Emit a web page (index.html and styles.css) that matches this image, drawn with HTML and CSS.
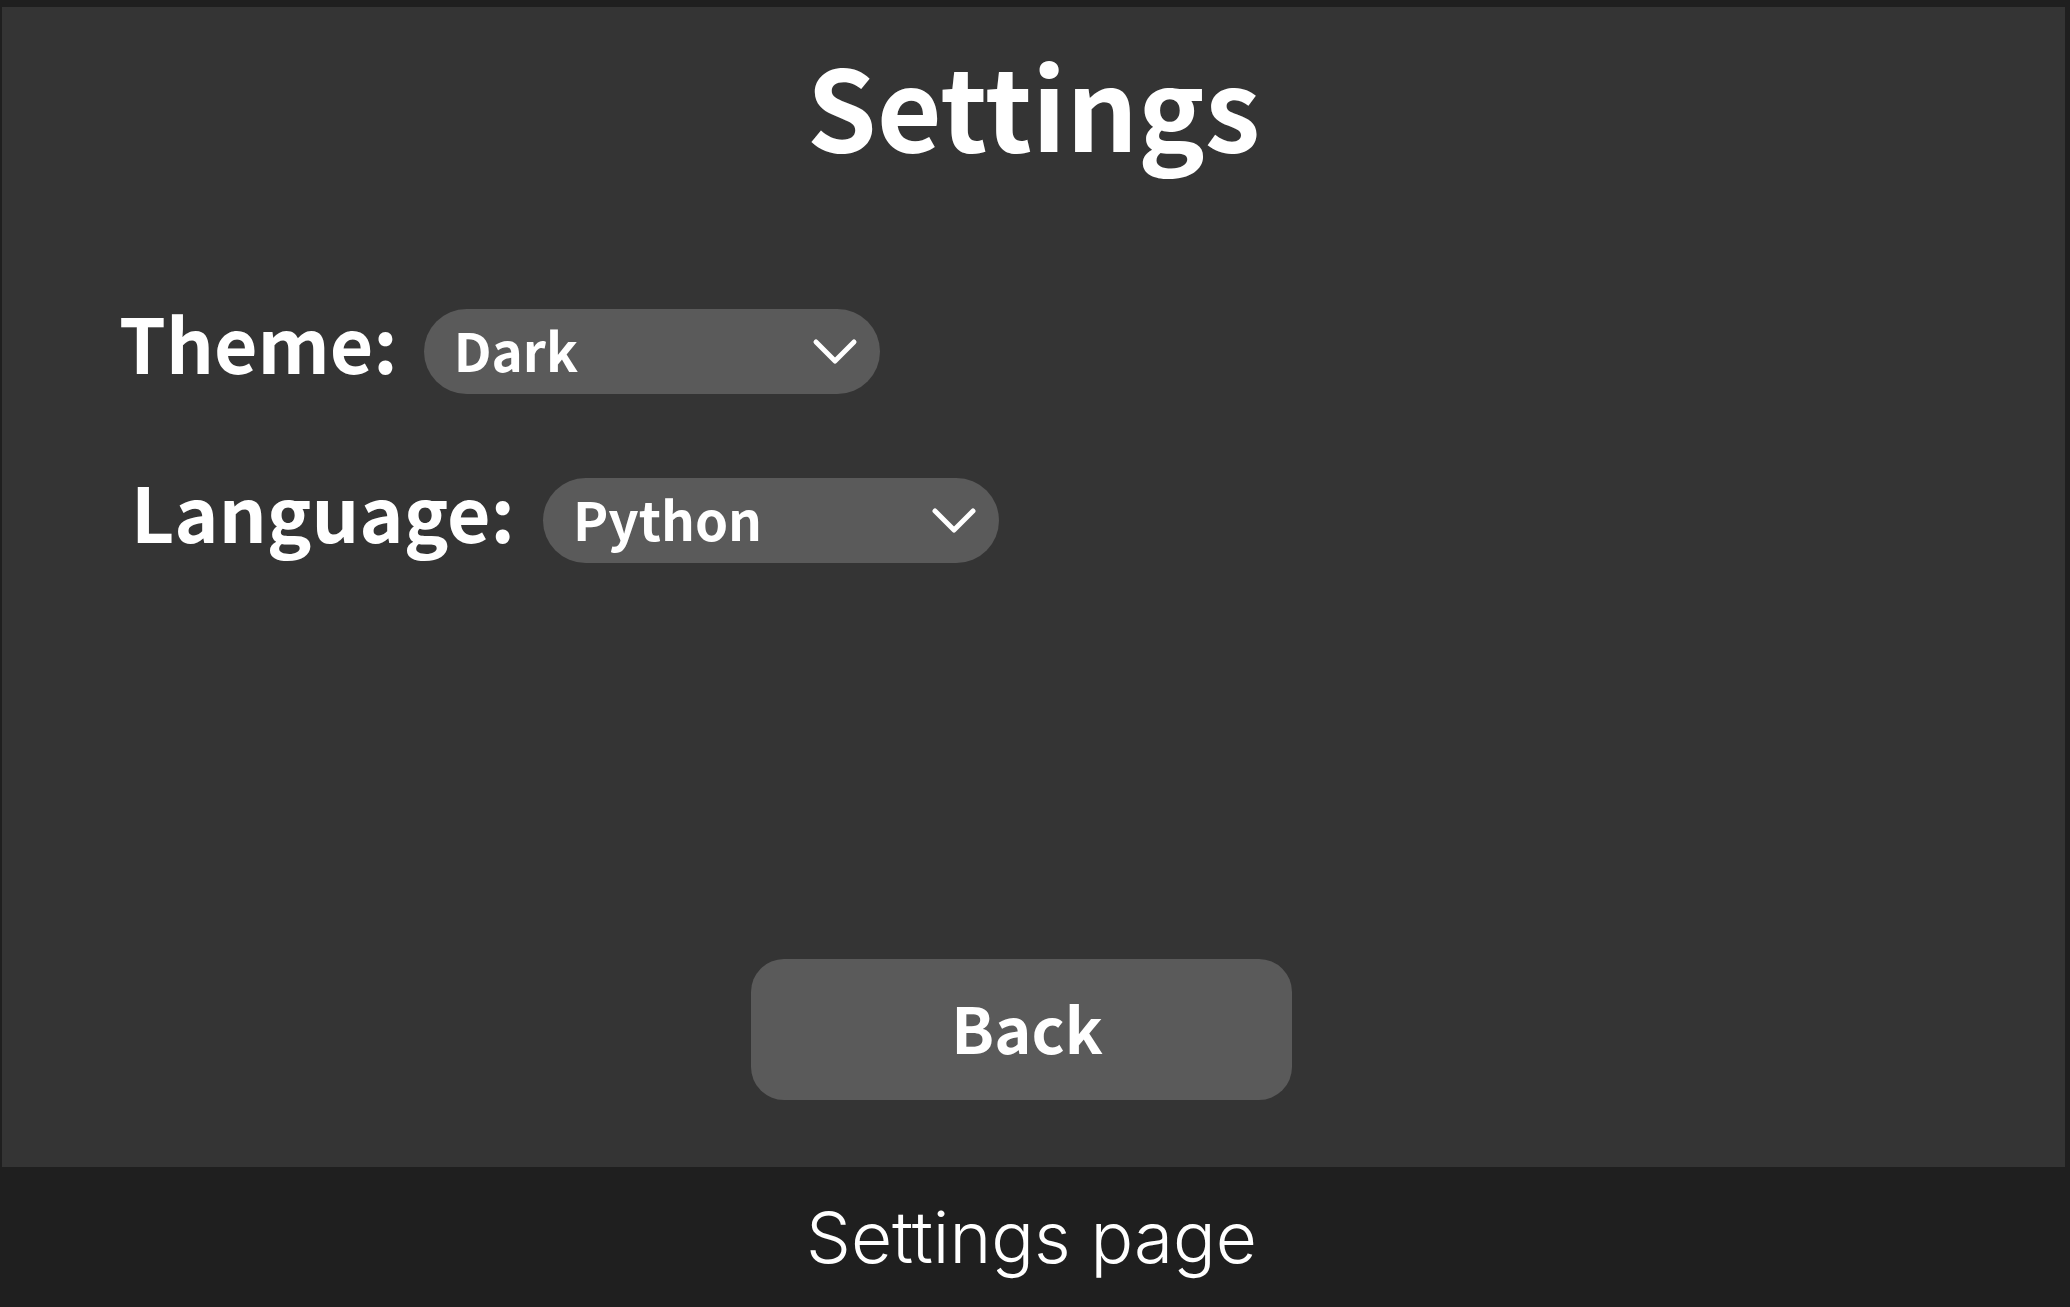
FILE: index.html
```html
<!DOCTYPE html>
<html lang="en">
<head>
<meta charset="utf-8">
<title>Settings</title>
<link rel="stylesheet" href="styles.css">
</head>
<body>
<div class="app">
  <main class="panel">
    <h1 class="title">Settings</h1>
    <div class="fields">
      <div class="field field-theme">
        <label class="field-label">Theme:</label>
        <div class="select">
          <span class="select-value">Dark</span>
          <svg class="chevron" width="46" height="28" viewBox="0 0 46 28"><path d="M4 4 L23 23 L42 4" fill="none" stroke="#ffffff" stroke-width="5" stroke-linecap="round" stroke-linejoin="round"/></svg>
        </div>
      </div>
      <div class="field field-lang">
        <label class="field-label">Language:</label>
        <div class="select">
          <span class="select-value">Python</span>
          <svg class="chevron" width="46" height="28" viewBox="0 0 46 28"><path d="M4 4 L23 23 L42 4" fill="none" stroke="#ffffff" stroke-width="5" stroke-linecap="round" stroke-linejoin="round"/></svg>
        </div>
      </div>
    </div>
    <div class="actions">
      <button class="btn">Back</button>
    </div>
  </main>
  <footer class="caption">Settings page</footer>
</div>
</body>
</html>
```

FILE: styles.css
```css
html, body {
  margin: 0;
  padding: 0;
}
body {
  background: #1f1f1f;
  font-family: "Noto Sans CJK SC", "Noto Sans", sans-serif;
  color: #ffffff;
}
.app {
  display: flex;
  flex-direction: column;
  height: 1307px;
}
.panel {
  height: 1160px;
  margin: 7px 5px 0 2px;
  background: #343434;
  display: flex;
  flex-direction: column;
  box-sizing: border-box;
  padding-bottom: 67px;
}
.title {
  margin: 40px 0 0 0;
  text-align: center;
  font-size: 112px;
  line-height: 112px;
  font-weight: 700;
}
.fields {
  display: flex;
  flex-direction: column;
  gap: 84px;
  padding-left: 117px;
  margin-top: 150px;
}
.field {
  display: flex;
  align-items: center;
  gap: 26px;
}
.field-lang {
  padding-left: 12px;
  gap: 28px;
}
.field-label {
  font-size: 75px;
  line-height: 75px;
  font-weight: 700;
  position: relative;
  top: -10px;
}
.select {
  width: 456px;
  height: 85px;
  box-sizing: border-box;
  border-radius: 43px;
  background: #5a5a5a;
  display: flex;
  align-items: center;
  justify-content: space-between;
  padding: 0 22px 0 30px;
}
.select-value {
  font-size: 53px;
  line-height: 53px;
  font-weight: 700;
  margin-bottom: 5px;
}
.chevron {
  display: block;
}
.actions {
  margin-top: auto;
  display: flex;
  justify-content: center;
  padding-right: 25px;
}
.btn {
  width: 541px;
  height: 141px;
  border: none;
  border-radius: 33px;
  background: #5a5a5a;
  color: #ffffff;
  font-family: "Noto Sans CJK SC", "Noto Sans", sans-serif;
  font-size: 63px;
  font-weight: 700;
  line-height: 63px;
  padding: 0 0 6px 12px;
}
.caption {
  flex: 1;
  display: flex;
  align-items: center;
  justify-content: center;
  padding-right: 7px;
  font-family: Inter, "Noto Sans", sans-serif;
  font-size: 71px;
  font-weight: 300;
  color: #ffffff;
}
```
